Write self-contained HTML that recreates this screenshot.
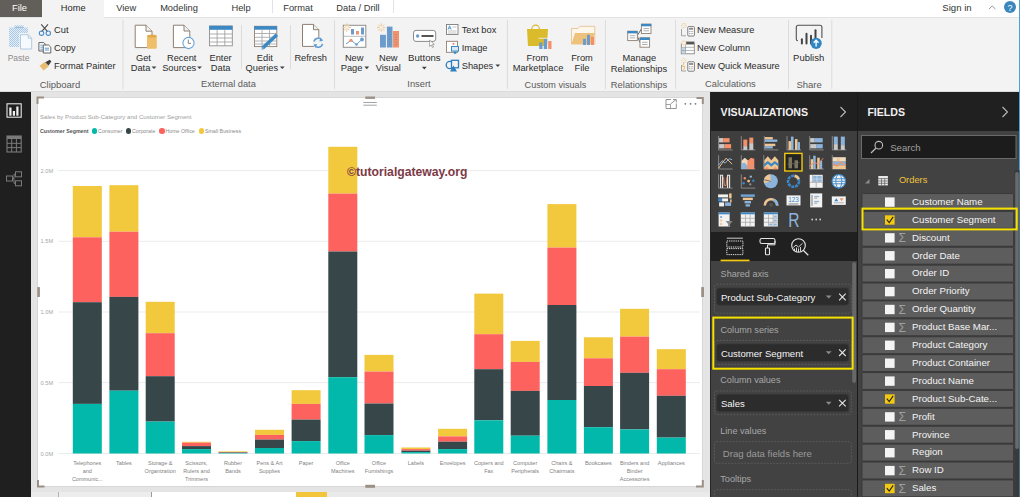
<!DOCTYPE html>
<html><head><meta charset="utf-8"><title>Power BI</title><style>
html,body{margin:0;padding:0;}
body{width:1020px;height:497px;overflow:hidden;position:relative;background:#f3f3f3;font-family:"Liberation Sans", sans-serif;}
.b{position:absolute;}
.t{position:absolute;white-space:pre;font-family:"Liberation Sans", sans-serif;}
svg text{font-family:"Liberation Sans", sans-serif;}
</style></head>
<body>
<div class="b" style="left:0px;top:0px;width:1020px;height:17px;background:#ffffff;"></div>
<div class="b" style="left:0px;top:16.6px;width:1020px;height:1px;background:#e3e3e3;"></div>
<div class="b" style="left:0px;top:0px;width:42px;height:16.5px;background:#625f5a;"></div>
<div class="b" style="left:42px;top:0px;width:61.5px;height:18px;background:#f3f3f3;"></div>
<div class="b" style="left:272px;top:0px;width:1px;height:13px;background:#e3e3e3;"></div>
<div class="b" style="left:393px;top:0px;width:1px;height:13px;background:#e3e3e3;"></div>
<div class="b" style="left:1019px;top:0px;width:1px;height:497px;background:#4aa3d6;"></div>
<div class="t" style="left:-180.5px;width:400px;text-align:center;top:2.96px;font-size:9.3px;line-height:11.16px;color:#ffffff;">File</div>
<div class="t" style="left:-126.8px;width:400px;text-align:center;top:2.96px;font-size:9.3px;line-height:11.16px;color:#262626;">Home</div>
<div class="t" style="left:-73.8px;width:400px;text-align:center;top:2.96px;font-size:9.3px;line-height:11.16px;color:#333;">View</div>
<div class="t" style="left:-21px;width:400px;text-align:center;top:2.96px;font-size:9.3px;line-height:11.16px;color:#333;">Modeling</div>
<div class="t" style="left:41px;width:400px;text-align:center;top:2.96px;font-size:9.3px;line-height:11.16px;color:#333;">Help</div>
<div class="t" style="left:98px;width:400px;text-align:center;top:2.96px;font-size:9.3px;line-height:11.16px;color:#333;">Format</div>
<div class="t" style="left:158px;width:400px;text-align:center;top:2.96px;font-size:9.3px;line-height:11.16px;color:#333;">Data / Drill</div>
<div class="t" style="left:757px;width:400px;text-align:center;top:2.21px;font-size:9.6px;line-height:11.52px;color:#333;">Sign in</div>
<svg class="b" style="left:987px;top:3px" width="10" height="8"><path d="M2 6 L5.2 3 L8.4 6" fill="none" stroke="#9a9a9a" stroke-width="1"/></svg>
<svg class="b" style="left:1003px;top:0px" width="15" height="15"><circle cx="7" cy="7" r="6" fill="#3b86bd"/><text x="7" y="10.5" font-size="9" font-family="Liberation Sans" fill="#fff" text-anchor="middle">?</text></svg>
<div class="b" style="left:0px;top:17.6px;width:1019px;height:74.4px;background:#f3f3f3;"></div>
<div class="b" style="left:0px;top:91px;width:1019px;height:1px;background:#dcdcdc;"></div>
<svg class="b" style="left:0;top:0" width="1020" height="92" viewBox="0 0 1020 92"><rect x="122.5" y="20" width="1" height="69" fill="#dcdcdc"/><rect x="241.0" y="25" width="1" height="44" fill="#dcdcdc"/><rect x="290.0" y="25" width="1" height="44" fill="#dcdcdc"/><rect x="334.0" y="20" width="1" height="69" fill="#dcdcdc"/><rect x="506.9" y="20" width="1" height="69" fill="#dcdcdc"/><rect x="604.9" y="20" width="1" height="69" fill="#dcdcdc"/><rect x="675.1" y="20" width="1" height="69" fill="#dcdcdc"/><rect x="788.0" y="20" width="1" height="69" fill="#dcdcdc"/><rect x="831.3" y="20" width="1" height="69" fill="#dcdcdc"/><defs><pattern id="pdot" width="2" height="2" patternUnits="userSpaceOnUse"><rect width="2" height="2" fill="#e4eef7"/><rect width="1" height="1" fill="#a9c9e6"/><rect x="1" y="1" width="1" height="1" fill="#a9c9e6"/></pattern></defs><path d="M9 27.6 H28.1 V33 H19.3 V47.1 H9 Z" fill="url(#pdot)"/><path d="M14.5 25.2 H23.5 V29.8 H14.5 Z" fill="url(#pdot)"/><path d="M14.5 27.6 H23.5" stroke="#9bbad6" stroke-width="1"/><path d="M20.5 34.7 H28.2 L31.7 38.2 V49 H20.5 Z" fill="#f7fafd" stroke="#a9c6df" stroke-width="0.9"/><path d="M28.2 34.7 V38.2 H31.7" fill="none" stroke="#a9c6df" stroke-width="0.9"/><path d="M41.2 24.3 L47.6 31.6 M48.0 24.3 L41.6 31.6" stroke="#4a4a4a" stroke-width="1.1" fill="none"/><circle cx="41.5" cy="33.2" r="2.2" fill="none" stroke="#4a8fcb" stroke-width="1.1"/><circle cx="48.3" cy="33.2" r="2.2" fill="none" stroke="#4a8fcb" stroke-width="1.1"/><path d="M38.9 42.6 H43.8 L45.2 44 V51 H38.9 Z" fill="#fff" stroke="#555" stroke-width="0.9"/><path d="M40.3 45.2 h2.6 M40.3 47.2 h2.6 M40.3 49.2 h2.6" stroke="#4a8fcb" stroke-width="0.8"/><path d="M43.3 45 H48.6 L50.8 47.2 V53 H43.3 Z" fill="#fff" stroke="#555" stroke-width="0.9"/><path d="M44.8 48.2 h4.2 M44.8 50 h4.2" stroke="#4a8fcb" stroke-width="0.9"/><path d="M39.5 65.8 L45 61.8 L48.8 66.2 L43.5 70.5 Z" fill="#e8bb72"/><path d="M45.3 62.3 L49.8 59.8 L51.3 61.5 L48.5 65.6 Z" fill="#3c3c3c"/><path d="M135.2 25.2 H146 L152 31.2 V47.6 H135.2 Z" fill="#fff" stroke="#8e7f72" stroke-width="1"/><path d="M146 25.2 V31.2 H152" fill="#f2f2f2" stroke="#8e7f72" stroke-width="1"/><rect x="147" y="36" width="9.8" height="12.8" rx="1" fill="#efbe6a"/><ellipse cx="151.9" cy="36" rx="4.9" ry="1.6" fill="#e3a848"/><path d="M173.4 25.2 H184 L189.8 31 V47.6 H173.4 Z" fill="#fff" stroke="#8e7f72" stroke-width="1"/><path d="M184 25.2 V31 H189.8" fill="#f2f2f2" stroke="#8e7f72" stroke-width="1"/><circle cx="188.5" cy="43" r="5.6" fill="#fff" stroke="#6aa3d6" stroke-width="1.1"/><path d="M188.3 39.6 V43.4 H191" fill="none" stroke="#777" stroke-width="0.9"/><rect x="209.5" y="26" width="22.8" height="19.8" fill="#fff" stroke="#8f8f8f" stroke-width="0.9"/><rect x="209.3" y="25.8" width="23.2" height="4" fill="#3b88c2"/><path d="M217.1 30 V45.8 M224.8 30 V45.8 M209.5 34 H232.3 M209.5 38 H232.3 M209.5 42 H232.3" stroke="#9a9a9a" stroke-width="0.8"/><rect x="254.5" y="26.3" width="22.3" height="20.3" fill="#fff" stroke="#8e7f72" stroke-width="0.9"/><rect x="254.3" y="26.1" width="22.7" height="3.6" fill="#3b88c2"/><path d="M262 29.7 V46.6 M269.5 29.7 V46.6 M254.5 33.5 H276.8 M254.5 37.3 H276.8 M254.5 41 H276.8 M254.5 44 H276.8" stroke="#a0a0a0" stroke-width="0.8"/><path d="M262.5 48.3 L276.8 34.8" stroke="#3b88c2" stroke-width="3.6" stroke-linecap="butt"/><path d="M261.6 49.4 L263.5 47.4" stroke="#7fb2d8" stroke-width="1.4"/><path d="M302.5 24.4 H313.5 L318.8 29.7 V46.4 H302.5 Z" fill="#fff" stroke="#8e7f72" stroke-width="1"/><path d="M313.5 24.4 V29.7 H318.8" fill="#f2f2f2" stroke="#8e7f72" stroke-width="1"/><circle cx="318.2" cy="42.7" r="5.8" fill="#f3f3f3"/><path d="M313.9 41.5 A4.4 4.4 0 0 1 322 40.3 M322.5 43.9 A4.4 4.4 0 0 1 314.4 45.1" fill="none" stroke="#5b9bd5" stroke-width="1.5"/><path d="M320.4 37.6 L323 40.8 L319.4 41.4 Z M316 47.8 L313.4 44.6 L317 44 Z" fill="#5b9bd5"/><rect x="343.3" y="25.3" width="22.5" height="22" fill="#fff" stroke="#8e8e8e" stroke-width="1"/><path d="M343.3 36.3 H365.8" stroke="#aaa" stroke-width="0.8"/><rect x="351" y="29" width="3" height="5.5" fill="#6d9ccc"/><rect x="356" y="31" width="3" height="3.5" fill="#f4906a"/><rect x="361" y="27.5" width="3" height="7" fill="#6d9ccc"/><path d="M346 44 L351 40.3 L356.5 44.5 L362 39.3" fill="none" stroke="#6d9ccc" stroke-width="1"/><circle cx="351" cy="40.3" r="1.6" fill="#f4906a"/><circle cx="356.5" cy="44.5" r="1.3" fill="#6d9ccc"/><circle cx="362" cy="39.5" r="1.9" fill="#6d9ccc"/><circle cx="346.8" cy="27.6" r="2.4" fill="#f3f3f3"/><path d="M348.40 27.60 L351.00 27.60 M347.93 28.73 L349.77 30.57 M346.80 29.20 L346.80 31.80 M345.67 28.73 L343.83 30.57 M345.20 27.60 L342.60 27.60 M345.67 26.47 L343.83 24.63 M346.80 26.00 L346.80 23.40 M347.93 26.47 L349.77 24.63" stroke="#eec48a" stroke-width="1"/><rect x="380" y="34.8" width="5.9" height="12.7" fill="#6d9ccc"/><rect x="386.9" y="26.6" width="5.6" height="20.9" fill="#6d9ccc"/><rect x="393" y="31" width="6" height="16.5" fill="#f4906a"/><path d="M389.7 29 v16 M396 34 v12" stroke="#5a7fa6" stroke-width="0.7" stroke-dasharray="1 1.5"/><circle cx="381.2" cy="27.6" r="2.4" fill="#f3f3f3"/><path d="M382.80 27.60 L385.40 27.60 M382.33 28.73 L384.17 30.57 M381.20 29.20 L381.20 31.80 M380.07 28.73 L378.23 30.57 M379.60 27.60 L377.00 27.60 M380.07 26.47 L378.23 24.63 M381.20 26.00 L381.20 23.40 M382.33 26.47 L384.17 24.63" stroke="#eec48a" stroke-width="1"/><rect x="413.5" y="30.4" width="22.2" height="11" rx="2.5" fill="#fff" stroke="#8a8a8a" stroke-width="1"/><circle cx="417.6" cy="36" r="1.7" fill="#6d9ccc"/><rect x="421.5" y="35" width="12" height="2" fill="#555"/><path d="M429.6 40 L429.6 46.5 L431.2 45 L432.6 47.6 L433.6 47 L432.3 44.5 L434.3 44.3 Z" fill="#fff" stroke="#777" stroke-width="0.6"/><rect x="446.5" y="24.5" width="11.5" height="10" fill="#fff" stroke="#7d7d7d" stroke-width="0.9"/><path d="M448 29.5 L449.6 25.8 L451.2 29.5 M448.6 28.2 h2" fill="none" stroke="#3b88c2" stroke-width="0.8"/><path d="M452.5 27 h4 M448 31 h8.5 M448 33 h8.5" stroke="#aaa" stroke-width="0.7"/><rect x="446.5" y="41.3" width="11" height="11" fill="#fff" stroke="#8e7f72" stroke-width="0.9"/><circle cx="453.5" cy="43.8" r="1.1" fill="#f4906a"/><rect x="451" y="46" width="8" height="5.6" fill="#3b88c2"/><rect x="452" y="47" width="6" height="3.6" fill="#d6e7f5"/><rect x="453.8" y="51.6" width="2.5" height="2.2" fill="#3b88c2"/><circle cx="449.8" cy="65" r="3.6" fill="none" stroke="#2f7fbd" stroke-width="1.3"/><rect x="451.5" y="60.3" width="7" height="7.5" fill="#f3f3f3" stroke="#2f7fbd" stroke-width="1.3"/><path d="M450 71.5 L453.5 65.5 L457 71.5 Z" fill="#2f7fbd"/><path d="M531.8 29 A3.8 3.8 0 0 1 539.4 29" fill="none" stroke="#d9b72a" stroke-width="1.2"/><path d="M527 29 H548 L547 46 H528 Z" fill="#d9bb2c"/><rect x="539.2" y="42.5" width="3.3" height="6.5" fill="#6d9ccc"/><rect x="543.8" y="38.5" width="3.3" height="10.5" fill="#6d9ccc"/><rect x="548.2" y="41" width="3.3" height="8" fill="#f4906a"/><rect x="538.4" y="37.8" width="13.8" height="0.8" fill="#f3f3f3"/><path d="M571.5 28.5 H578 L580 26.3 H594.8 V44 H571.5 Z" fill="#fdf6ea" stroke="#e5c48f" stroke-width="0.9"/><path d="M571.5 44 L575 33 H594.8 L591.5 44 Z" fill="#eec27a"/><rect x="583" y="38.8" width="3" height="6.2" fill="#6d9ccc"/><rect x="587" y="34.8" width="3" height="10.2" fill="#6d9ccc"/><rect x="591" y="36.8" width="3" height="8.2" fill="#f4906a"/><path d="M637.3 35.5 L641.4 29 M637.3 36 L640 42.5" stroke="#555" stroke-width="0.9"/><rect x="627.7" y="31.2" width="9.6" height="9.4" fill="#fff" stroke="#8e7f72" stroke-width="0.9"/><rect x="627.5" y="31.0" width="10" height="2.4" fill="#3b88c2"/><path d="M629.7 35.7 h5.6 M629.7 37.9 h5.6" stroke="#999" stroke-width="0.8"/><rect x="641.4" y="24.1" width="9.6" height="9.4" fill="#fff" stroke="#8e7f72" stroke-width="0.9"/><rect x="641.1999999999999" y="23.900000000000002" width="10" height="2.4" fill="#3b88c2"/><path d="M643.4 28.6 h5.6 M643.4 30.8 h5.6" stroke="#999" stroke-width="0.8"/><rect x="640" y="37.8" width="9.6" height="9.4" fill="#fff" stroke="#8e7f72" stroke-width="0.9"/><rect x="639.8" y="37.599999999999994" width="10" height="2.4" fill="#3b88c2"/><path d="M642 42.3 h5.6 M642 44.5 h5.6" stroke="#999" stroke-width="0.8"/><path d="M681.5 29 V35.8 H686" fill="none" stroke="#9a9a9a" stroke-width="0.9"/><rect x="687.8" y="26.6" width="6.6" height="9.4" rx="0.8" fill="#fff" stroke="#6e6e6e" stroke-width="0.9"/><rect x="689.0999999999999" y="27.900000000000002" width="4" height="1.8" fill="#888"/><path d="M689.0999999999999 31.6 h4 M689.0999999999999 33.6 h4" stroke="#888" stroke-width="0.9" stroke-dasharray="1 0.6"/><circle cx="683.8" cy="25.6" r="2.4" fill="#f3f3f3"/><path d="M685.40 25.60 L686.40 25.60 M684.93 26.73 L685.64 27.44 M683.80 27.20 L683.80 28.20 M682.67 26.73 L681.96 27.44 M682.20 25.60 L681.20 25.60 M682.67 24.47 L681.96 23.76 M683.80 24.00 L683.80 23.00 M684.93 24.47 L685.64 23.76" stroke="#eec070" stroke-width="1"/><rect x="681.3" y="44" width="13" height="9.8" fill="#fff" stroke="#8a8a8a" stroke-width="0.9"/><rect x="686" y="41.6" width="8.4" height="2.6" fill="#555"/><rect x="681.8" y="47.5" width="3.6" height="5.8" fill="#bcd7ef"/><path d="M685.5 44 V53.8 M681.3 47.3 H694.3 M681.3 50.5 H694.3" stroke="#999" stroke-width="0.7"/><circle cx="683.8" cy="43.0" r="2.4" fill="#f3f3f3"/><path d="M685.40 43.00 L686.40 43.00 M684.93 44.13 L685.64 44.84 M683.80 44.60 L683.80 45.60 M682.67 44.13 L681.96 44.84 M682.20 43.00 L681.20 43.00 M682.67 41.87 L681.96 41.16 M683.80 41.40 L683.80 40.40 M684.93 41.87 L685.64 41.16" stroke="#eec070" stroke-width="1"/><path d="M681.5 65 V71 H686" fill="none" stroke="#9a9a9a" stroke-width="0.9"/><path d="M684.2 62 L682.5 66.5 L685 66.5 L683.3 70.8" fill="none" stroke="#eec070" stroke-width="1"/><rect x="687.8" y="61.8" width="6.6" height="9.4" rx="0.8" fill="#fff" stroke="#6e6e6e" stroke-width="0.9"/><rect x="689.0999999999999" y="63.099999999999994" width="4" height="1.8" fill="#888"/><path d="M689.0999999999999 66.8 h4 M689.0999999999999 68.8 h4" stroke="#888" stroke-width="0.9" stroke-dasharray="1 0.6"/><circle cx="683.8" cy="60.6" r="2.4" fill="#f3f3f3"/><path d="M685.40 60.60 L686.20 60.60 M684.93 61.73 L685.50 62.30 M683.80 62.20 L683.80 63.00 M682.67 61.73 L682.10 62.30 M682.20 60.60 L681.40 60.60 M682.67 59.47 L682.10 58.90 M683.80 59.00 L683.80 58.20 M684.93 59.47 L685.50 58.90" stroke="#eec070" stroke-width="1"/><path d="M798 40.8 A1.8 1.8 0 0 1 796.3 39 V27.2 A2 2 0 0 1 798.3 25.2 H819.9 A2 2 0 0 1 821.9 27.2 V38" fill="none" stroke="#505050" stroke-width="1.1"/><path d="M801.9 39.2 V43.4" stroke="#444" stroke-width="2" stroke-linecap="round"/><path d="M806.5 33.7 V43.4" stroke="#444" stroke-width="2" stroke-linecap="round"/><path d="M811 35.8 V43.4" stroke="#444" stroke-width="2" stroke-linecap="round"/><path d="M815.5 30.3 V43.4" stroke="#444" stroke-width="2" stroke-linecap="round"/><circle cx="816.1" cy="43.3" r="5.6" fill="#2f86c2"/><path d="M816.1 46.6 V40.6 M813.7 42.8 L816.1 40.3 L818.5 42.8" fill="none" stroke="#fff" stroke-width="1.4"/><path d="M151.6 66.39999999999999 h4.8 l-2.4 2.6 z" fill="#404040"/><path d="M197.1 66.39999999999999 h4.8 l-2.4 2.6 z" fill="#404040"/><path d="M279.90000000000003 66.39999999999999 h4.8 l-2.4 2.6 z" fill="#404040"/><path d="M364.40000000000003 66.6 h4.8 l-2.4 2.6 z" fill="#404040"/><path d="M421.90000000000003 66.8 h4.8 l-2.4 2.6 z" fill="#404040"/><path d="M495.40000000000003 64.39999999999999 h4.8 l-2.4 2.6 z" fill="#404040"/></svg>
<div class="t" style="left:-181.5px;width:400px;text-align:center;top:53.08px;font-size:8.5px;line-height:10.20px;color:#8c8c8c;">Paste</div>
<div class="t" style="left:54px;top:24.96px;font-size:9.3px;line-height:11.16px;color:#2b2b2b;">Cut</div>
<div class="t" style="left:54px;top:43.06px;font-size:9.3px;line-height:11.16px;color:#2b2b2b;">Copy</div>
<div class="t" style="left:54px;top:60.86px;font-size:9.3px;line-height:11.16px;color:#2b2b2b;">Format Painter</div>
<div class="t" style="left:-140px;width:400px;text-align:center;top:79.36px;font-size:9.5px;line-height:11.40px;color:#5a5a5a;">Clipboard</div>
<div class="t" style="left:-56.599999999999994px;width:400px;text-align:center;top:52.76px;font-size:9.3px;line-height:11.16px;color:#2b2b2b;">Get</div>
<div class="t" style="left:-59.5px;width:400px;text-align:center;top:63.06px;font-size:9.3px;line-height:11.16px;color:#2b2b2b;">Data</div>
<div class="t" style="left:-18.30000000000001px;width:400px;text-align:center;top:52.76px;font-size:9.3px;line-height:11.16px;color:#2b2b2b;">Recent</div>
<div class="t" style="left:-20.80000000000001px;width:400px;text-align:center;top:63.06px;font-size:9.3px;line-height:11.16px;color:#2b2b2b;">Sources</div>
<div class="t" style="left:20.599999999999994px;width:400px;text-align:center;top:52.76px;font-size:9.3px;line-height:11.16px;color:#2b2b2b;">Enter</div>
<div class="t" style="left:20.599999999999994px;width:400px;text-align:center;top:63.06px;font-size:9.3px;line-height:11.16px;color:#2b2b2b;">Data</div>
<div class="t" style="left:64.80000000000001px;width:400px;text-align:center;top:52.76px;font-size:9.3px;line-height:11.16px;color:#2b2b2b;">Edit</div>
<div class="t" style="left:61.80000000000001px;width:400px;text-align:center;top:63.06px;font-size:9.3px;line-height:11.16px;color:#2b2b2b;">Queries</div>
<div class="t" style="left:110.69999999999999px;width:400px;text-align:center;top:52.76px;font-size:9.3px;line-height:11.16px;color:#2b2b2b;">Refresh</div>
<div class="t" style="left:28.5px;width:400px;text-align:center;top:79.46px;font-size:9.3px;line-height:11.16px;color:#5a5a5a;">External data</div>
<div class="t" style="left:154.2px;width:400px;text-align:center;top:53.06px;font-size:9.3px;line-height:11.16px;color:#2b2b2b;">New</div>
<div class="t" style="left:151.60000000000002px;width:400px;text-align:center;top:63.16px;font-size:9.3px;line-height:11.16px;color:#2b2b2b;">Page</div>
<div class="t" style="left:188.3px;width:400px;text-align:center;top:53.06px;font-size:9.3px;line-height:11.16px;color:#2b2b2b;">New</div>
<div class="t" style="left:188.3px;width:400px;text-align:center;top:63.16px;font-size:9.3px;line-height:11.16px;color:#2b2b2b;">Visual</div>
<div class="t" style="left:224.39999999999998px;width:400px;text-align:center;top:52.01px;font-size:9.6px;line-height:11.52px;color:#2b2b2b;">Buttons</div>
<div class="t" style="left:461.7px;top:24.96px;font-size:9.3px;line-height:11.16px;color:#2b2b2b;">Text box</div>
<div class="t" style="left:461.7px;top:42.96px;font-size:9.3px;line-height:11.16px;color:#2b2b2b;">Image</div>
<div class="t" style="left:461.7px;top:60.66px;font-size:9.3px;line-height:11.16px;color:#2b2b2b;">Shapes</div>
<div class="t" style="left:219px;width:400px;text-align:center;top:79.46px;font-size:9.3px;line-height:11.16px;color:#5a5a5a;">Insert</div>
<div class="t" style="left:337.4px;width:400px;text-align:center;top:52.86px;font-size:9.3px;line-height:11.16px;color:#2b2b2b;">From</div>
<div class="t" style="left:338px;width:400px;text-align:center;top:63.16px;font-size:9.3px;line-height:11.16px;color:#2b2b2b;">Marketplace</div>
<div class="t" style="left:382px;width:400px;text-align:center;top:52.86px;font-size:9.3px;line-height:11.16px;color:#2b2b2b;">From</div>
<div class="t" style="left:382px;width:400px;text-align:center;top:63.16px;font-size:9.3px;line-height:11.16px;color:#2b2b2b;">File</div>
<div class="t" style="left:355.4px;width:400px;text-align:center;top:79.57px;font-size:9.1px;line-height:10.92px;color:#5a5a5a;">Custom visuals</div>
<div class="t" style="left:439.4px;width:400px;text-align:center;top:52.86px;font-size:9.3px;line-height:11.16px;color:#2b2b2b;">Manage</div>
<div class="t" style="left:439px;width:400px;text-align:center;top:63.11px;font-size:9.4px;line-height:11.28px;color:#2b2b2b;">Relationships</div>
<div class="t" style="left:439px;width:400px;text-align:center;top:79.41px;font-size:9.4px;line-height:11.28px;color:#5a5a5a;">Relationships</div>
<div class="t" style="left:697px;top:25.16px;font-size:9.3px;line-height:11.16px;color:#2b2b2b;">New Measure</div>
<div class="t" style="left:697px;top:42.86px;font-size:9.3px;line-height:11.16px;color:#2b2b2b;">New Column</div>
<div class="t" style="left:697px;top:60.92px;font-size:9.2px;line-height:11.04px;color:#2b2b2b;">New Quick Measure</div>
<div class="t" style="left:530.4px;width:400px;text-align:center;top:79.46px;font-size:9.3px;line-height:11.16px;color:#5a5a5a;">Calculations</div>
<div class="t" style="left:608.7px;width:400px;text-align:center;top:52.46px;font-size:9.5px;line-height:11.40px;color:#2b2b2b;">Publish</div>
<div class="t" style="left:609.1px;width:400px;text-align:center;top:79.36px;font-size:9.5px;line-height:11.40px;color:#5a5a5a;">Share</div>
<div class="b" style="left:0px;top:92px;width:31px;height:405px;background:#1f1f1f;"></div>
<div class="b" style="left:31px;top:92px;width:679px;height:400px;background:#e4e4e4;"></div>
<div class="b" style="left:31px;top:492px;width:679px;height:5px;background:#eaeaea;"></div>
<div class="b" style="left:58px;top:492px;width:1px;height:5px;background:#b5b5b5;"></div>
<div class="b" style="left:59px;top:492px;width:92px;height:5px;background:#ededed;"></div>
<div class="b" style="left:151px;top:492px;width:1px;height:5px;background:#9c9c9c;"></div>
<div class="b" style="left:152px;top:492px;width:144px;height:5px;background:#ffffff;"></div>
<div class="b" style="left:296px;top:492px;width:31px;height:5px;background:#f2c53a;"></div>
<div class="b" style="left:37px;top:96.5px;width:666px;height:490px;background:#ffffff;box-sizing:border-box;border:1px solid #d6d6d6;height:390px;"></div>
<div class="b" style="left:710px;top:92px;width:1px;height:405px;background:#262626;"></div>
<div class="b" style="left:711px;top:92px;width:146px;height:39px;background:#202020;"></div>
<div class="b" style="left:711px;top:131px;width:146px;height:101px;background:#3e3e3e;"></div>
<div class="b" style="left:711px;top:232px;width:146px;height:29px;background:#202020;"></div>
<div class="b" style="left:711px;top:261px;width:146px;height:236px;background:#424242;"></div>
<div class="b" style="left:857px;top:92px;width:1px;height:405px;background:#1a1a1a;"></div>
<div class="b" style="left:858px;top:92px;width:161px;height:39px;background:#202020;"></div>
<div class="b" style="left:858px;top:131px;width:161px;height:366px;background:#424242;"></div>
<svg class="b" style="left:0;top:92px" width="31" height="110" viewBox="0 92 31 110"><rect x="7" y="103.8" width="14.2" height="13.4" fill="none" stroke="#e6e6e6" stroke-width="1.1"/><rect x="9.3" y="107.5" width="2.2" height="8.2" fill="#f0f0f0"/><rect x="12.8" y="111" width="2.2" height="4.7" fill="#f0f0f0"/><rect x="16.3" y="106.5" width="2.2" height="9.2" fill="#f0f0f0"/><rect x="7" y="136" width="14.2" height="16" fill="none" stroke="#7a7a7a" stroke-width="1.1"/><rect x="7" y="136" width="14.2" height="3" fill="#7a7a7a"/><path d="M11.7 139 V152 M16.4 139 V152 M7 143.3 H21.2 M7 147.6 H21.2" stroke="#7a7a7a" stroke-width="1"/><rect x="6.5" y="176" width="6" height="5" fill="none" stroke="#7a7a7a" stroke-width="1"/><rect x="15.5" y="171.8" width="6" height="5" fill="none" stroke="#7a7a7a" stroke-width="1"/><rect x="15.5" y="180.8" width="6" height="5" fill="none" stroke="#7a7a7a" stroke-width="1"/><path d="M12.5 178.5 H14 V174.3 H15.5 M14 178.5 V183.3 H15.5" fill="none" stroke="#7a7a7a" stroke-width="1"/></svg>
<svg class="b" style="left:0;top:0" width="1020" height="497" viewBox="0 0 1020 497"><path d="M37.5 104 V97.5 H44" fill="none" stroke="#9b8f86" stroke-width="2"/><path d="M696.5 98 H702.8 V104" fill="none" stroke="#9b8f86" stroke-width="2"/><path d="M38 480 V486.5 H44.5" fill="none" stroke="#9b8f86" stroke-width="2"/><path d="M696 486.6 H702.8 V480" fill="none" stroke="#9b8f86" stroke-width="2"/><rect x="365.3" y="96.5" width="9.7" height="2.4" fill="#9b8f86"/><rect x="365.3" y="484.8" width="9.7" height="3" fill="#9b8f86"/><rect x="701.2" y="287.1" width="2.8" height="9.9" fill="#9b8f86"/><rect x="37.3" y="287.1" width="2.6" height="9.9" fill="#9b8f86"/><path d="M363.3 102.5 H376.8 M363.3 105.2 H376.8" stroke="#9a9a9a" stroke-width="0.9"/><path d="M671 99.5 H666 V108.5 H676.3 V103.5" fill="none" stroke="#8a8a8a" stroke-width="0.9"/><path d="M666 104.5 H670.5 V108.5" fill="none" stroke="#8a8a8a" stroke-width="0.8"/><path d="M670.5 104 L676 99.5 M673 99.5 H676.3 V102.5" fill="none" stroke="#8a8a8a" stroke-width="0.9"/><circle cx="685.3" cy="103.8" r="0.9" fill="#777"/><circle cx="690.5" cy="103.8" r="0.9" fill="#777"/><circle cx="695.5" cy="103.8" r="0.9" fill="#777"/></svg>
<svg class="b" style="left:0;top:0" width="1020" height="497" viewBox="0 0 1020 497"><rect x="58.3" y="170.1" width="641.5" height="1" fill="#ececec"/><rect x="58.3" y="240.8" width="641.5" height="1" fill="#ececec"/><rect x="58.3" y="311.5" width="641.5" height="1" fill="#ececec"/><rect x="58.3" y="382.1" width="641.5" height="1" fill="#ececec"/><rect x="58.3" y="453.0" width="641.5" height="1" fill="#ececec"/><rect x="72.8" y="186.0" width="29.0" height="51.30" fill="#f2c83c"/><rect x="72.8" y="237.3" width="29.0" height="64.90" fill="#fd625e"/><rect x="72.8" y="302.2" width="29.0" height="101.70" fill="#374649"/><rect x="72.8" y="403.9" width="29.0" height="49.60" fill="#01b8aa"/><rect x="109.4" y="185.2" width="29.0" height="46.50" fill="#f2c83c"/><rect x="109.4" y="231.7" width="29.0" height="65.20" fill="#fd625e"/><rect x="109.4" y="296.9" width="29.0" height="93.80" fill="#374649"/><rect x="109.4" y="390.7" width="29.0" height="62.80" fill="#01b8aa"/><rect x="145.7" y="301.8" width="29.0" height="31.40" fill="#f2c83c"/><rect x="145.7" y="333.2" width="29.0" height="43.00" fill="#fd625e"/><rect x="145.7" y="376.2" width="29.0" height="45.40" fill="#374649"/><rect x="145.7" y="421.6" width="29.0" height="31.90" fill="#01b8aa"/><rect x="182.0" y="441.8" width="29.0" height="0.90" fill="#f2c83c"/><rect x="182.0" y="442.7" width="29.0" height="3.40" fill="#fd625e"/><rect x="182.0" y="446.1" width="29.0" height="3.00" fill="#374649"/><rect x="182.0" y="449.1" width="29.0" height="4.40" fill="#01b8aa"/><rect x="218.5" y="451.4" width="29.0" height="0.60" fill="#f2c83c"/><rect x="218.5" y="452.0" width="29.0" height="0.50" fill="#fd625e"/><rect x="218.5" y="452.5" width="29.0" height="0.50" fill="#374649"/><rect x="218.5" y="453.0" width="29.0" height="0.50" fill="#01b8aa"/><rect x="255.0" y="429.8" width="29.0" height="5.10" fill="#f2c83c"/><rect x="255.0" y="434.9" width="29.0" height="4.70" fill="#fd625e"/><rect x="255.0" y="439.6" width="29.0" height="8.40" fill="#374649"/><rect x="255.0" y="448.0" width="29.0" height="5.50" fill="#01b8aa"/><rect x="291.6" y="390.2" width="29.0" height="13.70" fill="#f2c83c"/><rect x="291.6" y="403.9" width="29.0" height="15.70" fill="#fd625e"/><rect x="291.6" y="419.6" width="29.0" height="21.50" fill="#374649"/><rect x="291.6" y="441.1" width="29.0" height="12.40" fill="#01b8aa"/><rect x="328.3" y="146.8" width="29.0" height="46.80" fill="#f2c83c"/><rect x="328.3" y="193.6" width="29.0" height="57.90" fill="#fd625e"/><rect x="328.3" y="251.5" width="29.0" height="125.70" fill="#374649"/><rect x="328.3" y="377.2" width="29.0" height="76.30" fill="#01b8aa"/><rect x="364.5" y="354.9" width="29.0" height="16.70" fill="#f2c83c"/><rect x="364.5" y="371.6" width="29.0" height="31.90" fill="#fd625e"/><rect x="364.5" y="403.5" width="29.0" height="31.60" fill="#374649"/><rect x="364.5" y="435.1" width="29.0" height="18.40" fill="#01b8aa"/><rect x="401.4" y="447.5" width="29.0" height="1.60" fill="#f2c83c"/><rect x="401.4" y="449.1" width="29.0" height="1.60" fill="#fd625e"/><rect x="401.4" y="450.7" width="29.0" height="1.40" fill="#374649"/><rect x="401.4" y="452.1" width="29.0" height="1.40" fill="#01b8aa"/><rect x="438.1" y="428.8" width="29.0" height="7.60" fill="#f2c83c"/><rect x="438.1" y="436.4" width="29.0" height="5.30" fill="#fd625e"/><rect x="438.1" y="441.7" width="29.0" height="7.40" fill="#374649"/><rect x="438.1" y="449.1" width="29.0" height="4.40" fill="#01b8aa"/><rect x="474.3" y="293.6" width="29.0" height="40.60" fill="#f2c83c"/><rect x="474.3" y="334.2" width="29.0" height="35.00" fill="#fd625e"/><rect x="474.3" y="369.2" width="29.0" height="51.10" fill="#374649"/><rect x="474.3" y="420.3" width="29.0" height="33.20" fill="#01b8aa"/><rect x="510.7" y="340.9" width="29.0" height="21.00" fill="#f2c83c"/><rect x="510.7" y="361.9" width="29.0" height="29.00" fill="#fd625e"/><rect x="510.7" y="390.9" width="29.0" height="44.80" fill="#374649"/><rect x="510.7" y="435.7" width="29.0" height="17.80" fill="#01b8aa"/><rect x="547.4" y="204.1" width="29.0" height="43.50" fill="#f2c83c"/><rect x="547.4" y="247.6" width="29.0" height="57.40" fill="#fd625e"/><rect x="547.4" y="305.0" width="29.0" height="95.00" fill="#374649"/><rect x="547.4" y="400.0" width="29.0" height="53.50" fill="#01b8aa"/><rect x="583.9" y="337.3" width="29.0" height="21.00" fill="#f2c83c"/><rect x="583.9" y="358.3" width="29.0" height="27.70" fill="#fd625e"/><rect x="583.9" y="386.0" width="29.0" height="41.20" fill="#374649"/><rect x="583.9" y="427.2" width="29.0" height="26.30" fill="#01b8aa"/><rect x="620.1" y="308.8" width="29.0" height="27.80" fill="#f2c83c"/><rect x="620.1" y="336.6" width="29.0" height="36.20" fill="#fd625e"/><rect x="620.1" y="372.8" width="29.0" height="56.60" fill="#374649"/><rect x="620.1" y="429.4" width="29.0" height="24.10" fill="#01b8aa"/><rect x="656.8" y="349.2" width="29.0" height="20.00" fill="#f2c83c"/><rect x="656.8" y="369.2" width="29.0" height="26.60" fill="#fd625e"/><rect x="656.8" y="395.8" width="29.0" height="41.80" fill="#374649"/><rect x="656.8" y="437.6" width="29.0" height="15.90" fill="#01b8aa"/></svg>
<div class="t" style="left:-112.7px;width:400px;text-align:center;top:460.34px;font-size:5.5px;line-height:6.60px;color:#7f7f7f;">Telephones</div>
<div class="t" style="left:-112.7px;width:400px;text-align:center;top:468.04px;font-size:5.5px;line-height:6.60px;color:#7f7f7f;">and</div>
<div class="t" style="left:-112.7px;width:400px;text-align:center;top:475.74px;font-size:5.5px;line-height:6.60px;color:#7f7f7f;">Communic...</div>
<div class="t" style="left:-76.1px;width:400px;text-align:center;top:460.34px;font-size:5.5px;line-height:6.60px;color:#7f7f7f;">Tables</div>
<div class="t" style="left:-39.80000000000001px;width:400px;text-align:center;top:460.34px;font-size:5.5px;line-height:6.60px;color:#7f7f7f;">Storage &amp;</div>
<div class="t" style="left:-39.80000000000001px;width:400px;text-align:center;top:468.04px;font-size:5.5px;line-height:6.60px;color:#7f7f7f;">Organization</div>
<div class="t" style="left:-3.5px;width:400px;text-align:center;top:460.34px;font-size:5.5px;line-height:6.60px;color:#7f7f7f;">Scissors,</div>
<div class="t" style="left:-3.5px;width:400px;text-align:center;top:468.04px;font-size:5.5px;line-height:6.60px;color:#7f7f7f;">Rulers and</div>
<div class="t" style="left:-3.5px;width:400px;text-align:center;top:475.74px;font-size:5.5px;line-height:6.60px;color:#7f7f7f;">Trimmers</div>
<div class="t" style="left:33.0px;width:400px;text-align:center;top:460.34px;font-size:5.5px;line-height:6.60px;color:#7f7f7f;">Rubber</div>
<div class="t" style="left:33.0px;width:400px;text-align:center;top:468.04px;font-size:5.5px;line-height:6.60px;color:#7f7f7f;">Bands</div>
<div class="t" style="left:69.5px;width:400px;text-align:center;top:460.34px;font-size:5.5px;line-height:6.60px;color:#7f7f7f;">Pens &amp; Art</div>
<div class="t" style="left:69.5px;width:400px;text-align:center;top:468.04px;font-size:5.5px;line-height:6.60px;color:#7f7f7f;">Supplies</div>
<div class="t" style="left:106.10000000000002px;width:400px;text-align:center;top:460.34px;font-size:5.5px;line-height:6.60px;color:#7f7f7f;">Paper</div>
<div class="t" style="left:142.8px;width:400px;text-align:center;top:460.34px;font-size:5.5px;line-height:6.60px;color:#7f7f7f;">Office</div>
<div class="t" style="left:142.8px;width:400px;text-align:center;top:468.04px;font-size:5.5px;line-height:6.60px;color:#7f7f7f;">Machines</div>
<div class="t" style="left:179.0px;width:400px;text-align:center;top:460.34px;font-size:5.5px;line-height:6.60px;color:#7f7f7f;">Office</div>
<div class="t" style="left:179.0px;width:400px;text-align:center;top:468.04px;font-size:5.5px;line-height:6.60px;color:#7f7f7f;">Furnishings</div>
<div class="t" style="left:215.89999999999998px;width:400px;text-align:center;top:460.34px;font-size:5.5px;line-height:6.60px;color:#7f7f7f;">Labels</div>
<div class="t" style="left:252.60000000000002px;width:400px;text-align:center;top:460.34px;font-size:5.5px;line-height:6.60px;color:#7f7f7f;">Envelopes</div>
<div class="t" style="left:288.8px;width:400px;text-align:center;top:460.34px;font-size:5.5px;line-height:6.60px;color:#7f7f7f;">Copiers and</div>
<div class="t" style="left:288.8px;width:400px;text-align:center;top:468.04px;font-size:5.5px;line-height:6.60px;color:#7f7f7f;">Fax</div>
<div class="t" style="left:325.20000000000005px;width:400px;text-align:center;top:460.34px;font-size:5.5px;line-height:6.60px;color:#7f7f7f;">Computer</div>
<div class="t" style="left:325.20000000000005px;width:400px;text-align:center;top:468.04px;font-size:5.5px;line-height:6.60px;color:#7f7f7f;">Peripherals</div>
<div class="t" style="left:361.9px;width:400px;text-align:center;top:460.34px;font-size:5.5px;line-height:6.60px;color:#7f7f7f;">Chairs &amp;</div>
<div class="t" style="left:361.9px;width:400px;text-align:center;top:468.04px;font-size:5.5px;line-height:6.60px;color:#7f7f7f;">Chairmats</div>
<div class="t" style="left:398.4px;width:400px;text-align:center;top:460.34px;font-size:5.5px;line-height:6.60px;color:#7f7f7f;">Bookcases</div>
<div class="t" style="left:434.6px;width:400px;text-align:center;top:460.34px;font-size:5.5px;line-height:6.60px;color:#7f7f7f;">Binders and</div>
<div class="t" style="left:434.6px;width:400px;text-align:center;top:468.04px;font-size:5.5px;line-height:6.60px;color:#7f7f7f;">Binder</div>
<div class="t" style="left:434.6px;width:400px;text-align:center;top:475.74px;font-size:5.5px;line-height:6.60px;color:#7f7f7f;">Accessories</div>
<div class="t" style="left:471.29999999999995px;width:400px;text-align:center;top:460.34px;font-size:5.5px;line-height:6.60px;color:#7f7f7f;">Appliances</div>
<div class="t" style="left:40.5px;top:167.64px;font-size:5.7px;line-height:6.84px;color:#a6a6a6;">2.0M</div>
<div class="t" style="left:40.5px;top:238.34px;font-size:5.7px;line-height:6.84px;color:#a6a6a6;">1.5M</div>
<div class="t" style="left:40.5px;top:309.04px;font-size:5.7px;line-height:6.84px;color:#a6a6a6;">1.0M</div>
<div class="t" style="left:40.5px;top:379.64px;font-size:5.7px;line-height:6.84px;color:#a6a6a6;">0.5M</div>
<div class="t" style="left:40.5px;top:450.54px;font-size:5.7px;line-height:6.84px;color:#a6a6a6;">0.0M</div>
<div class="t" style="left:40px;top:113.43px;font-size:6.1px;line-height:7.32px;color:#a0a0a0;">Sales by Product Sub-Category and Customer Segment</div>
<div class="t" style="left:40px;top:128.14px;font-size:5.3px;line-height:6.36px;color:#555;font-weight:bold;">Customer Segment</div>
<div class="b" style="left:91.9px;top:128.39999999999998px;width:5.6px;height:5.6px;border-radius:50%;background:#01b8aa"></div>
<div class="t" style="left:98.10000000000001px;top:128.14px;font-size:5.3px;line-height:6.36px;color:#8a8a8a;">Consumer</div>
<div class="b" style="left:125.7px;top:128.39999999999998px;width:5.6px;height:5.6px;border-radius:50%;background:#374649"></div>
<div class="t" style="left:131.9px;top:128.14px;font-size:5.3px;line-height:6.36px;color:#8a8a8a;">Corporate</div>
<div class="b" style="left:159.2px;top:128.39999999999998px;width:5.6px;height:5.6px;border-radius:50%;background:#fd625e"></div>
<div class="t" style="left:165.4px;top:128.14px;font-size:5.3px;line-height:6.36px;color:#8a8a8a;">Home Office</div>
<div class="b" style="left:198.7px;top:128.39999999999998px;width:5.6px;height:5.6px;border-radius:50%;background:#f2c83c"></div>
<div class="t" style="left:204.9px;top:128.14px;font-size:5.3px;line-height:6.36px;color:#8a8a8a;">Small Business</div>
<div class="t" style="left:347px;top:164.66px;font-size:12.2px;line-height:14.64px;color:#7c3a46;font-weight:bold;">©tutorialgateway.org</div>
<svg class="b" style="left:0;top:0" width="1020" height="497" viewBox="0 0 1020 497"><rect x="784.8" y="153.4" width="17.2" height="17.6" fill="#232323" stroke="#f2c811" stroke-width="1.4"/><g transform="translate(785.5,154.3)"><rect x="3" y="3" width="3.5" height="11" fill="#7c7862"/><rect x="9" y="6" width="3.5" height="8" fill="#7c7862"/><path d="M2 10 L6 8.5 L9.5 10.5 L14 8" fill="none" stroke="#6b6a5e" stroke-width="0.8"/></g><g transform="translate(717.1,135.1)"><path d="M1.5 1 V14.8 H15.5" fill="none" stroke="#9a9a9a" stroke-width="0.8"/><rect x="2" y="3" width="4" height="4.3" fill="#c9c9c9"/><rect x="6" y="3" width="6.5" height="4.3" fill="#f4906a"/><rect x="2" y="9" width="5.5" height="4.3" fill="#c9c9c9"/><rect x="7.5" y="9" width="6.5" height="4.3" fill="#f4906a"/></g><g transform="translate(739.8,135.1)"><path d="M1.5 1 V14.8 H15.5" fill="none" stroke="#9a9a9a" stroke-width="0.8"/><rect x="3.5" y="11" width="4" height="3.8" fill="#c9c9c9"/><rect x="3.5" y="4.5" width="4" height="6.5" fill="#f4906a"/><rect x="9.5" y="8" width="4" height="6.8" fill="#c9c9c9"/><rect x="9.5" y="2.5" width="4" height="5.5" fill="#f4906a"/></g><g transform="translate(762.8,135.1)"><path d="M1.5 1 V14.8 H15.5" fill="none" stroke="#9a9a9a" stroke-width="0.8"/><rect x="2" y="2" width="8" height="2.4" fill="#efc692"/><rect x="2" y="4.4" width="12.5" height="2.4" fill="#8cb3dc"/><rect x="2" y="8.6" width="10.5" height="2.4" fill="#efc692"/><rect x="2" y="11" width="8" height="2.4" fill="#8cb3dc"/></g><g transform="translate(785.5,135.1)"><path d="M1.5 1 V14.8 H15.5" fill="none" stroke="#9a9a9a" stroke-width="0.8"/><rect x="3" y="6" width="2.5" height="8.8" fill="#efc692"/><rect x="5.5" y="1.5" width="2.5" height="13.3" fill="#8cb3dc"/><rect x="9.5" y="4" width="2.5" height="10.8" fill="#efc692"/><rect x="12" y="7" width="2.5" height="7.8" fill="#8cb3dc"/></g><g transform="translate(808.2,135.1)"><path d="M1.5 1 V14.8 H15.5" fill="none" stroke="#9a9a9a" stroke-width="0.8"/><rect x="2" y="3" width="4.5" height="4.3" fill="#c9c9c9"/><rect x="6.5" y="3" width="8" height="4.3" fill="#8cb3dc"/><rect x="2" y="9" width="6.5" height="4.3" fill="#c9c9c9"/><rect x="8.5" y="9" width="6" height="4.3" fill="#8cb3dc"/></g><g transform="translate(830.8,135.1)"><path d="M1.5 1 V14.8 H15.5" fill="none" stroke="#9a9a9a" stroke-width="0.8"/><rect x="3" y="1.5" width="4" height="7.5" fill="#8cb3dc"/><rect x="3" y="9" width="4" height="5.8" fill="#c9c9c9"/><rect x="10" y="1.5" width="4" height="8.5" fill="#8cb3dc"/><rect x="10" y="10" width="4" height="4.8" fill="#c9c9c9"/></g><g transform="translate(717.1,154.2)"><path d="M1.5 1 V14.8 H15.5" fill="none" stroke="#9a9a9a" stroke-width="0.8"/><path d="M1.5 11 L5 6.5 L8 9 L12 4.5 L15 5.5" fill="none" stroke="#8cb3dc" stroke-width="1"/><path d="M1.5 14 L5 9 L9 4 L15 10" fill="none" stroke="#efc692" stroke-width="1"/></g><g transform="translate(739.8,154.2)"><path d="M1.5 1 V14.8 H15.5" fill="none" stroke="#9a9a9a" stroke-width="0.8"/><path d="M1.8 14.8 V6.5 L5 3.5 L8.5 6.5 V14.8 Z" fill="#eed9bd"/><path d="M1.8 14.8 V9 L5 8.5 L8 12 L10 14.8 Z" fill="#8cb3dc"/><path d="M7.5 14.8 V7 L11 3.5 L14.5 4.5 V14.8 Z" fill="#f4906a"/><path d="M2 13 h5 M9 12 h5" stroke="#aaa" stroke-width="0.8" stroke-dasharray="1 1"/></g><g transform="translate(762.8,154.2)"><path d="M1 1 V15" stroke="#9a9a9a" stroke-width="0.8"/><path d="M1.5 15 V6 L5 2 L8.5 6 L12 2 L15.5 6 V15 Z" fill="#efc692"/><path d="M1.5 9.5 L5 6.8 L8.5 9.5 L12 6.8 L15.5 9.5 V12 L12 9.5 L8.5 12.5 L5 9.5 L1.5 12.5 Z" fill="#3d86c6"/><path d="M1.5 15 L4 12.5 L6.5 15 Z M10 15 L12.5 12.5 L15 15 Z" fill="#f4906a"/></g><g transform="translate(808.2,154.2)"><path d="M1.5 1 V14.8 H15.5" fill="none" stroke="#9a9a9a" stroke-width="0.8"/><rect x="2.5" y="5" width="2.5" height="9.8" fill="#efc692"/><rect x="5" y="1.5" width="2.5" height="13.3" fill="#8cb3dc"/><rect x="9" y="3.5" width="2.5" height="11.3" fill="#efc692"/><rect x="11.5" y="6.5" width="2.5" height="8.3" fill="#8cb3dc"/><path d="M1.5 12 L6 8 L10 10 L15 4" fill="none" stroke="#f4906a" stroke-width="0.9"/></g><g transform="translate(830.8,154.2)"><path d="M1.5 1 V14.8 H15.5" fill="none" stroke="#9a9a9a" stroke-width="0.8"/><rect x="2" y="3" width="13" height="4.5" fill="#f0dcc0"/><rect x="2" y="7.5" width="13" height="3.5" fill="#8cb3dc"/><rect x="2" y="11" width="13" height="3.8" fill="#efc692"/><path d="M2 9 L6 12 L10 8 L15 11" stroke="#f4906a" stroke-width="1.2" fill="none"/><rect x="6" y="4" width="3" height="3" fill="#efc692"/></g><g transform="translate(717.1,173.3)"><path d="M1.5 1 V14.8 H15.5" fill="none" stroke="#9a9a9a" stroke-width="0.8"/><path d="M3.5 14.8 V2 H5.5 V14.8 M10.5 14.8 V2 H12.5 V14.8" fill="none" stroke="#e8e8e8" stroke-width="1.1"/><path d="M6.5 4 L7.2 12 L9 12.5 L9.8 3.5" fill="none" stroke="#f4906a" stroke-width="0.9"/></g><g transform="translate(739.8,173.3)"><path d="M1.5 1 V14.8 H15.5" fill="none" stroke="#9a9a9a" stroke-width="0.8"/><circle cx="5" cy="5" r="1.2" fill="#f4906a"/><circle cx="11" cy="3.3" r="1.2" fill="#8cb3dc"/><circle cx="8.8" cy="7.8" r="1.4" fill="#efc692"/><circle cx="3.8" cy="10" r="1.2" fill="#3d86c6"/><circle cx="13.5" cy="7.5" r="1.2" fill="#3d86c6"/><circle cx="10.5" cy="11" r="1.1" fill="#999"/></g><g transform="translate(762.8,173.3)"><circle cx="8" cy="8" r="7" fill="#8cb3dc"/><path d="M8 8 L7.5 1 A7 7 0 0 0 1.3 10 Z" fill="#efc692"/><path d="M8 8 L1.5 6.5" stroke="#555" stroke-width="0.8"/></g><g transform="translate(785.5,173.3)"><circle cx="8" cy="8" r="5.5" fill="none" stroke="#3d86c6" stroke-width="2.6" stroke-dasharray="3 0.8"/><path d="M9 2.6 A5.5 5.5 0 0 1 13.2 6" fill="none" stroke="#efc692" stroke-width="2.6"/></g><g transform="translate(808.2,173.3)"><rect x="1.5" y="1.5" width="13" height="13" fill="#f2f2f2"/><rect x="5" y="2.5" width="3.5" height="3" fill="#8cb3dc"/><rect x="9" y="2.5" width="4.5" height="3" fill="#8cb3dc"/><rect x="5" y="6" width="3.5" height="2.5" fill="#8cb3dc"/><rect x="9" y="6" width="4.5" height="2.5" fill="#8cb3dc"/><path d="M1.5 9 H14.5 M4.5 1.5 V9 M8 9 V14.5" stroke="#999" stroke-width="0.7"/></g><g transform="translate(830.8,173.3)"><circle cx="8" cy="8" r="6.8" fill="#f2f2f2" stroke="#3d86c6" stroke-width="1.1"/><path d="M1.5 5.5 H14.5 M1.2 8 H14.8 M1.5 10.5 H14.5" stroke="#3d86c6" stroke-width="0.9"/><ellipse cx="8" cy="8" rx="3" ry="6.8" fill="none" stroke="#3d86c6" stroke-width="0.9"/></g><g transform="translate(717.1,192.4)"><rect x="1" y="2" width="10" height="3" fill="#f2f2f2"/><rect x="12" y="1" width="2.5" height="5" fill="#efc692"/><rect x="1" y="6" width="4" height="3" fill="#3d86c6"/><rect x="5" y="6" width="6" height="3" fill="#f2f2f2"/><rect x="2" y="10" width="5" height="4" fill="#f2f2f2"/><rect x="8" y="10" width="6" height="3.5" fill="#8cb3dc"/><rect x="13" y="7" width="1.5" height="3" fill="#efc692"/></g><g transform="translate(739.8,192.4)"><rect x="1" y="2" width="14" height="2.4" fill="#6fa6d8"/><rect x="3" y="5.3" width="10" height="2.4" fill="#efc692"/><rect x="4.8" y="8.6" width="6.4" height="2.4" fill="#8cb3dc"/><rect x="5.8" y="11.9" width="4.4" height="2.2" fill="#8cb3dc"/></g><g transform="translate(762.8,192.4)"><path d="M2 13 A6.2 6.2 0 0 1 14.4 13" fill="none" stroke="#efc692" stroke-width="2.6"/><path d="M10.5 7.3 A6.2 6.2 0 0 1 14.4 13" fill="none" stroke="#8cb3dc" stroke-width="2.6"/><circle cx="8.2" cy="12.5" r="1.8" fill="#555"/></g><g transform="translate(785.5,192.4)"><rect x="1" y="3" width="14" height="10" fill="#f2f2f2"/><text x="8" y="9.8" font-size="6.4" text-anchor="middle" fill="#3d86c6" font-family="Liberation Sans">123</text><rect x="3" y="10.8" width="10" height="1.5" fill="#aaa"/></g><g transform="translate(808.2,192.4)"><rect x="2" y="1" width="12" height="14" fill="#f2f2f2"/><rect x="3" y="2.5" width="1.6" height="11" fill="#aaa"/><rect x="6" y="3.5" width="5" height="1.2" fill="#8cb3dc"/><rect x="6" y="5.3" width="3" height="0.9" fill="#999"/><rect x="6" y="8.5" width="5" height="1.2" fill="#8cb3dc"/><rect x="6" y="10.3" width="3" height="0.9" fill="#999"/></g><g transform="translate(830.8,192.4)"><rect x="1" y="4" width="14" height="8.5" fill="#f2f2f2"/><path d="M3.5 8.8 L5.5 5.8 L7.5 8.8 Z" fill="#3d86c6"/><path d="M8.8 5.8 H12.8 L10.8 8.8 Z" fill="#f4906a"/><rect x="3" y="10" width="10" height="0.9" fill="#aaa"/></g><g transform="translate(717.1,211.5)"><rect x="1.5" y="1" width="11" height="14" fill="#f2f2f2"/><rect x="1.5" y="1" width="11" height="1.8" fill="#3d86c6"/><rect x="3" y="4.5" width="2" height="2" fill="#8cb3dc"/><rect x="3" y="8" width="2" height="2" fill="#efc692"/><rect x="3" y="11.5" width="2" height="2" fill="#efc692"/><path d="M8.5 9.5 H15.5 L13 12.5 V15.5 H11 V12.5 Z" fill="#888"/></g><g transform="translate(739.8,211.5)"><rect x="1" y="1" width="14" height="14" fill="#f2f2f2"/><rect x="1" y="1" width="14" height="1.8" fill="#3d86c6"/><path d="M5.7 2.8 V15 M10.3 2.8 V15 M1 6.8 H15 M1 10.8 H15" stroke="#aaa" stroke-width="0.8"/></g><g transform="translate(762.8,211.5)"><rect x="1" y="1" width="14" height="14" fill="#f2f2f2"/><rect x="1" y="1" width="14" height="1.8" fill="#3d86c6"/><path d="M5.7 2.8 V15 M10.3 2.8 V15 M1 6.8 H15 M1 10.8 H15" stroke="#aaa" stroke-width="0.8"/><rect x="11" y="4" width="3" height="2" fill="#8cb3dc"/><rect x="11" y="8" width="3" height="2" fill="#8cb3dc"/><rect x="6.5" y="12" width="3" height="2" fill="#8cb3dc"/><rect x="11" y="12" width="3" height="2" fill="#8cb3dc"/></g><g transform="translate(785.5,211.5)"><text x="0" y="0" font-size="19.5" text-anchor="middle" fill="#8cb3dc" font-family="Liberation Sans" transform="translate(8.3,15.2) scale(0.8,1)">R</text></g><g transform="translate(808.2,211.5)"><circle cx="4" cy="8" r="0.9" fill="#ccc"/><circle cx="8" cy="8" r="0.9" fill="#ccc"/><circle cx="12" cy="8" r="0.9" fill="#ccc"/></g><path d="M726.8 238.2 H742.9" stroke="#bdbdbd" stroke-width="1.1"/><rect x="726.8" y="241" width="16.1" height="6" fill="none" stroke="#e0e0e0" stroke-width="1" stroke-dasharray="1.3 0.9"/><rect x="726.8" y="248.6" width="16.1" height="6" fill="none" stroke="#e0e0e0" stroke-width="1" stroke-dasharray="1.3 0.9"/><rect x="760" y="238.5" width="15" height="5" rx="1.8" fill="none" stroke="#e6e6e6" stroke-width="1.1"/><path d="M775 241 V244.8 H767.5 V248" fill="none" stroke="#e6e6e6" stroke-width="1"/><rect x="765.5" y="248" width="4" height="6.8" rx="0.8" fill="none" stroke="#e6e6e6" stroke-width="1.1"/><circle cx="798.5" cy="245.5" r="6.8" fill="none" stroke="#e6e6e6" stroke-width="1.1"/><path d="M803.2 250.3 L808.3 255.2" stroke="#e6e6e6" stroke-width="1.2"/><path d="M793.2 247.5 L796 245 L798.5 247 L802.5 243.3" fill="none" stroke="#e6e6e6" stroke-width="0.9"/><path d="M794.5 248.5 V251 M796.5 247.5 V251.8 M798.5 248.5 V252 M800.5 247 V251.5" stroke="#e6e6e6" stroke-width="0.9"/><rect x="720.6" y="259.6" width="28.9" height="1.7" fill="#f2c811"/><rect x="852.2" y="262" width="3.8" height="121" rx="1.9" fill="#686868"/><rect x="714.5" y="284.2" width="136.8" height="29.0" rx="2" fill="none" stroke="#5e5e5e" stroke-width="0.8" stroke-dasharray="2 1.2"/><rect x="716.5" y="288" width="132.3" height="17.19999999999999" rx="3" fill="#2c2c2c" stroke="#383838" stroke-width="0.8"/><rect x="714.5" y="340.4" width="136.8" height="24.100000000000023" rx="2" fill="none" stroke="#5e5e5e" stroke-width="0.8" stroke-dasharray="2 1.2"/><rect x="716.5" y="344" width="132.3" height="17.399999999999977" rx="3" fill="#2c2c2c" stroke="#383838" stroke-width="0.8"/><rect x="714.5" y="391" width="136.8" height="23.69999999999999" rx="2" fill="none" stroke="#5e5e5e" stroke-width="0.8" stroke-dasharray="2 1.2"/><rect x="716.5" y="394.3" width="132.3" height="17.399999999999977" rx="3" fill="#2c2c2c" stroke="#383838" stroke-width="0.8"/><rect x="714.5" y="441.6" width="136.8" height="21.69999999999999" rx="2" fill="none" stroke="#5e5e5e" stroke-width="0.8" stroke-dasharray="2 1.2"/><rect x="714.5" y="489.6" width="136.8" height="30.399999999999977" rx="2" fill="none" stroke="#5e5e5e" stroke-width="0.8" stroke-dasharray="2 1.2"/><rect x="713.3" y="317.6" width="139.3" height="51.1" fill="none" stroke="#f5e200" stroke-width="2"/><path d="M825.8 295.6 h5.8 l-2.9 3 z" fill="#8a8a8a"/><path d="M839.1 293.70000000000005 l6.6 6.6 M845.7 293.70000000000005 l-6.6 6.6" stroke="#e6e6e6" stroke-width="1.1"/><path d="M825.8 351.3 h5.8 l-2.9 3 z" fill="#8a8a8a"/><path d="M839.1 349.40000000000003 l6.6 6.6 M845.7 349.40000000000003 l-6.6 6.6" stroke="#e6e6e6" stroke-width="1.1"/><path d="M825.8 401.7 h5.8 l-2.9 3 z" fill="#8a8a8a"/><path d="M839.1 399.8 l6.6 6.6 M845.7 399.8 l-6.6 6.6" stroke="#e6e6e6" stroke-width="1.1"/></svg>
<div class="t" style="left:720.6px;top:106.39px;font-size:10.6px;line-height:12.72px;color:#f0f0f0;font-weight:bold;">VISUALIZATIONS</div>
<svg class="b" style="left:838px;top:105px" width="12" height="14"><path d="M2.5 2 L7.5 7 L2.5 12" fill="none" stroke="#b8b8b8" stroke-width="1.1"/></svg>
<div class="t" style="left:720.6px;top:268.57px;font-size:9.1px;line-height:10.92px;color:#a8a8a8;">Shared axis</div>
<div class="t" style="left:720.9px;top:292.13px;font-size:9.55px;line-height:11.46px;color:#f4f4f4;">Product Sub-Category</div>
<div class="t" style="left:720.5px;top:324.57px;font-size:9.1px;line-height:10.92px;color:#a8a8a8;">Column series</div>
<div class="t" style="left:720.9px;top:347.83px;font-size:9.55px;line-height:11.46px;color:#f4f4f4;">Customer Segment</div>
<div class="t" style="left:720.3px;top:375.47px;font-size:9.1px;line-height:10.92px;color:#a8a8a8;">Column values</div>
<div class="t" style="left:720.9px;top:398.23px;font-size:9.55px;line-height:11.46px;color:#f4f4f4;">Sales</div>
<div class="t" style="left:720.3px;top:425.87px;font-size:9.1px;line-height:10.92px;color:#a8a8a8;">Line values</div>
<div class="t" style="left:722.8px;top:448.01px;font-size:9.6px;line-height:11.52px;color:#9a9a9a;">Drag data fields here</div>
<div class="t" style="left:720.3px;top:474.27px;font-size:9.1px;line-height:10.92px;color:#a8a8a8;">Tooltips</div>
<svg class="b" style="left:0;top:0" width="1020" height="497" viewBox="0 0 1020 497"><rect x="861.5" y="135.5" width="154.5" height="23" fill="#1c1c1c" stroke="#6a6a6a" stroke-width="1"/><circle cx="878.8" cy="145.2" r="3.8" fill="none" stroke="#bdbdbd" stroke-width="1.1"/><path d="M876.1 148 L871 153" stroke="#bdbdbd" stroke-width="1.2"/><path d="M865 183.5 L869.5 183.5 L869.5 179 Z" fill="#8a8a8a"/><rect x="878.3" y="176" width="9.6" height="9.4" fill="#e8e8e8"/><path d="M878.3 178.6 H887.9 M878.3 181 H887.9 M878.3 183.3 H887.9 M881.5 178.6 V185.4 M884.7 178.6 V185.4" stroke="#5a5a5a" stroke-width="0.7"/><rect x="1014.5" y="170" width="5" height="327" fill="#3a3a3a"/><rect x="1015.2" y="172" width="3.6" height="277" rx="1.8" fill="#6a6a6a"/><rect x="862" y="193.55" width="151.6" height="16.9" rx="1.2" fill="#5d5d5d" stroke="#383838" stroke-width="0.9"/><rect x="885" y="197.4" width="9.6" height="9.4" fill="#f4f4f4"/><rect x="862" y="211.45" width="151.6" height="16.9" rx="1.2" fill="#5d5d5d" stroke="#383838" stroke-width="0.9"/><rect x="885" y="215.3" width="9.6" height="9.4" fill="#f2c811"/><path d="M886.8 219.7 L889.2 222.5 L893.2 216.9" fill="none" stroke="#222" stroke-width="1.1"/><rect x="862" y="229.35" width="151.6" height="16.9" rx="1.2" fill="#5d5d5d" stroke="#383838" stroke-width="0.9"/><rect x="885" y="233.2" width="9.6" height="9.4" fill="#f4f4f4"/><text x="898.6" y="242.1" font-size="12" fill="#a0a0a0" font-family="Liberation Serif">Σ</text><rect x="862" y="247.25" width="151.6" height="16.9" rx="1.2" fill="#5d5d5d" stroke="#383838" stroke-width="0.9"/><rect x="885" y="251.1" width="9.6" height="9.4" fill="#f4f4f4"/><rect x="862" y="265.15" width="151.6" height="16.9" rx="1.2" fill="#5d5d5d" stroke="#383838" stroke-width="0.9"/><rect x="885" y="269.0" width="9.6" height="9.4" fill="#f4f4f4"/><rect x="862" y="283.05" width="151.6" height="16.9" rx="1.2" fill="#5d5d5d" stroke="#383838" stroke-width="0.9"/><rect x="885" y="286.9" width="9.6" height="9.4" fill="#f4f4f4"/><rect x="862" y="300.95" width="151.6" height="16.9" rx="1.2" fill="#5d5d5d" stroke="#383838" stroke-width="0.9"/><rect x="885" y="304.8" width="9.6" height="9.4" fill="#f4f4f4"/><text x="898.6" y="313.7" font-size="12" fill="#a0a0a0" font-family="Liberation Serif">Σ</text><rect x="862" y="318.85" width="151.6" height="16.9" rx="1.2" fill="#5d5d5d" stroke="#383838" stroke-width="0.9"/><rect x="885" y="322.7" width="9.6" height="9.4" fill="#f4f4f4"/><text x="898.6" y="331.6" font-size="12" fill="#a0a0a0" font-family="Liberation Serif">Σ</text><rect x="862" y="336.75" width="151.6" height="16.9" rx="1.2" fill="#5d5d5d" stroke="#383838" stroke-width="0.9"/><rect x="885" y="340.6" width="9.6" height="9.4" fill="#f4f4f4"/><rect x="862" y="354.65" width="151.6" height="16.9" rx="1.2" fill="#5d5d5d" stroke="#383838" stroke-width="0.9"/><rect x="885" y="358.5" width="9.6" height="9.4" fill="#f4f4f4"/><rect x="862" y="372.55" width="151.6" height="16.9" rx="1.2" fill="#5d5d5d" stroke="#383838" stroke-width="0.9"/><rect x="885" y="376.4" width="9.6" height="9.4" fill="#f4f4f4"/><rect x="862" y="390.45" width="151.6" height="16.9" rx="1.2" fill="#5d5d5d" stroke="#383838" stroke-width="0.9"/><rect x="885" y="394.3" width="9.6" height="9.4" fill="#f2c811"/><path d="M886.8 398.7 L889.2 401.5 L893.2 395.9" fill="none" stroke="#222" stroke-width="1.1"/><rect x="862" y="408.35" width="151.6" height="16.9" rx="1.2" fill="#5d5d5d" stroke="#383838" stroke-width="0.9"/><rect x="885" y="412.2" width="9.6" height="9.4" fill="#f4f4f4"/><text x="898.6" y="421.1" font-size="12" fill="#a0a0a0" font-family="Liberation Serif">Σ</text><rect x="862" y="426.25" width="151.6" height="16.9" rx="1.2" fill="#5d5d5d" stroke="#383838" stroke-width="0.9"/><rect x="885" y="430.1" width="9.6" height="9.4" fill="#f4f4f4"/><rect x="862" y="444.15" width="151.6" height="16.9" rx="1.2" fill="#5d5d5d" stroke="#383838" stroke-width="0.9"/><rect x="885" y="448.0" width="9.6" height="9.4" fill="#f4f4f4"/><rect x="862" y="462.05" width="151.6" height="16.9" rx="1.2" fill="#5d5d5d" stroke="#383838" stroke-width="0.9"/><rect x="885" y="465.9" width="9.6" height="9.4" fill="#f4f4f4"/><text x="898.6" y="474.8" font-size="12" fill="#a0a0a0" font-family="Liberation Serif">Σ</text><rect x="862" y="479.95" width="151.6" height="16.9" rx="1.2" fill="#5d5d5d" stroke="#383838" stroke-width="0.9"/><rect x="885" y="483.8" width="9.6" height="9.4" fill="#f2c811"/><path d="M886.8 488.2 L889.2 491.0 L893.2 485.4" fill="none" stroke="#222" stroke-width="1.1"/><text x="898.6" y="492.7" font-size="12" fill="#a0a0a0" font-family="Liberation Serif">Σ</text><rect x="862.5" y="208.6" width="154.2" height="20.8" fill="none" stroke="#f5e200" stroke-width="2"/></svg>
<div class="t" style="left:912px;top:195.86px;font-size:9.7px;line-height:11.64px;color:#f4f4f4;">Customer Name</div>
<div class="t" style="left:912px;top:213.76px;font-size:9.7px;line-height:11.64px;color:#f4f4f4;">Customer Segment</div>
<div class="t" style="left:912px;top:231.66px;font-size:9.7px;line-height:11.64px;color:#f4f4f4;">Discount</div>
<div class="t" style="left:912px;top:249.56px;font-size:9.7px;line-height:11.64px;color:#f4f4f4;">Order Date</div>
<div class="t" style="left:912px;top:267.46px;font-size:9.7px;line-height:11.64px;color:#f4f4f4;">Order ID</div>
<div class="t" style="left:912px;top:285.36px;font-size:9.7px;line-height:11.64px;color:#f4f4f4;">Order Priority</div>
<div class="t" style="left:912px;top:303.26px;font-size:9.7px;line-height:11.64px;color:#f4f4f4;">Order Quantity</div>
<div class="t" style="left:912px;top:321.16px;font-size:9.7px;line-height:11.64px;color:#f4f4f4;">Product Base Mar...</div>
<div class="t" style="left:912px;top:339.06px;font-size:9.7px;line-height:11.64px;color:#f4f4f4;">Product Category</div>
<div class="t" style="left:912px;top:356.96px;font-size:9.7px;line-height:11.64px;color:#f4f4f4;">Product Container</div>
<div class="t" style="left:912px;top:374.86px;font-size:9.7px;line-height:11.64px;color:#f4f4f4;">Product Name</div>
<div class="t" style="left:912px;top:392.76px;font-size:9.7px;line-height:11.64px;color:#f4f4f4;">Product Sub-Cate...</div>
<div class="t" style="left:912px;top:410.66px;font-size:9.7px;line-height:11.64px;color:#f4f4f4;">Profit</div>
<div class="t" style="left:912px;top:428.56px;font-size:9.7px;line-height:11.64px;color:#f4f4f4;">Province</div>
<div class="t" style="left:912px;top:446.46px;font-size:9.7px;line-height:11.64px;color:#f4f4f4;">Region</div>
<div class="t" style="left:912px;top:464.36px;font-size:9.7px;line-height:11.64px;color:#f4f4f4;">Row ID</div>
<div class="t" style="left:912px;top:482.26px;font-size:9.7px;line-height:11.64px;color:#f4f4f4;">Sales</div>
<div class="t" style="left:867.4px;top:106.39px;font-size:10.6px;line-height:12.72px;color:#f0f0f0;font-weight:bold;">FIELDS</div>
<svg class="b" style="left:1000px;top:105px" width="12" height="14"><path d="M2.5 2 L7.5 7 L2.5 12" fill="none" stroke="#b8b8b8" stroke-width="1.1"/></svg>
<div class="t" style="left:890.2px;top:142.11px;font-size:9.6px;line-height:11.52px;color:#a0a0a0;">Search</div>
<div class="t" style="left:898.9px;top:175.16px;font-size:9.3px;line-height:11.16px;color:#efc53c;">Orders</div>
</body></html>
